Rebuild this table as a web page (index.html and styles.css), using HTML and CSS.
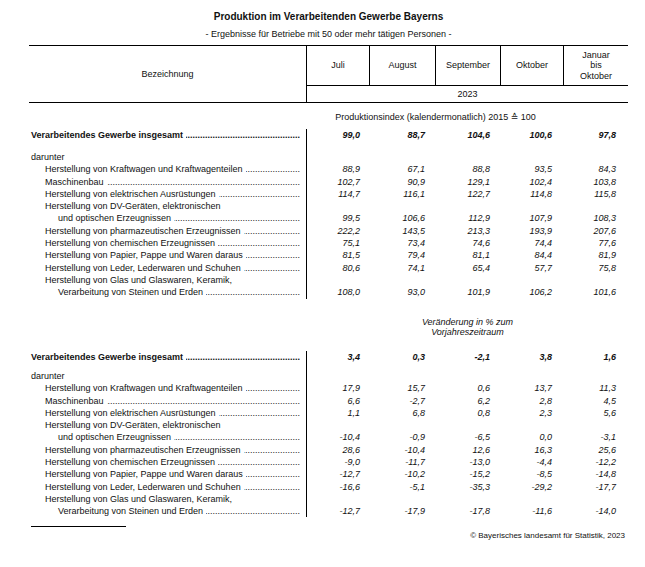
FILE: index.html
```html
<!DOCTYPE html>
<html lang="de">
<head>
<meta charset="utf-8">
<title>Produktion im Verarbeitenden Gewerbe Bayerns</title>
<link rel="stylesheet" href="styles.css">
</head>
<body>
<div class="page">
  <div class="title">Produktion im Verarbeitenden Gewerbe Bayerns</div>
  <div class="subtitle">- Ergebnisse für Betriebe mit 50 oder mehr tätigen Personen -</div>

  <div class="head">
    <div class="hc bez">Bezeichnung</div>
    <div class="hc m">Juli</div>
    <div class="hc m">August</div>
    <div class="hc m">September</div>
    <div class="hc m">Oktober</div>
    <div class="hc m last">Januar<br>bis<br>Oktober</div>
    <div class="hc year">2023</div>
  </div>

  <div class="caption"><span class="cap4">Produktionsindex (kalendermonatlich) 2015 ≙ 100</span></div>

  <div class="block block1">
    <div class="row total"><div class="lbl"><span class="lt">Verarbeitendes Gewerbe insgesamt</span><span class="dots"></span></div><div class="v">99,0</div><div class="v">88,7</div><div class="v">104,6</div><div class="v">100,6</div><div class="v">97,8</div></div>
    <div class="row spacer sp1"><div class="lbl"></div></div>
    <div class="row"><div class="lbl"><span class="lt">darunter</span></div></div>
    <div class="row"><div class="lbl ind"><span class="lt">Herstellung von Kraftwagen und Kraftwagenteilen</span><span class="dots"></span></div><div class="v">88,9</div><div class="v">67,1</div><div class="v">88,8</div><div class="v">93,5</div><div class="v">84,3</div></div>
    <div class="row"><div class="lbl ind"><span class="lt">Maschinenbau</span><span class="dots"></span></div><div class="v">102,7</div><div class="v">90,9</div><div class="v">129,1</div><div class="v">102,4</div><div class="v">103,8</div></div>
    <div class="row"><div class="lbl ind"><span class="lt">Herstellung von elektrischen Ausrüstungen</span><span class="dots"></span></div><div class="v">114,7</div><div class="v">116,1</div><div class="v">122,7</div><div class="v">114,8</div><div class="v">115,8</div></div>
    <div class="row"><div class="lbl ind"><span class="lt">Herstellung von DV-Geräten, elektronischen</span></div></div>
    <div class="row"><div class="lbl ind2"><span class="lt">und optischen Erzeugnissen</span><span class="dots"></span></div><div class="v">99,5</div><div class="v">106,6</div><div class="v">112,9</div><div class="v">107,9</div><div class="v">108,3</div></div>
    <div class="row"><div class="lbl ind"><span class="lt">Herstellung von pharmazeutischen Erzeugnissen</span><span class="dots"></span></div><div class="v">222,2</div><div class="v">143,5</div><div class="v">213,3</div><div class="v">193,9</div><div class="v">207,6</div></div>
    <div class="row"><div class="lbl ind"><span class="lt">Herstellung von chemischen Erzeugnissen</span><span class="dots"></span></div><div class="v">75,1</div><div class="v">73,4</div><div class="v">74,6</div><div class="v">74,4</div><div class="v">77,6</div></div>
    <div class="row"><div class="lbl ind"><span class="lt">Herstellung von Papier, Pappe und Waren daraus</span><span class="dots"></span></div><div class="v">81,5</div><div class="v">79,4</div><div class="v">81,1</div><div class="v">84,4</div><div class="v">81,9</div></div>
    <div class="row"><div class="lbl ind"><span class="lt">Herstellung von Leder, Lederwaren und Schuhen</span><span class="dots"></span></div><div class="v">80,6</div><div class="v">74,1</div><div class="v">65,4</div><div class="v">57,7</div><div class="v">75,8</div></div>
    <div class="row"><div class="lbl ind"><span class="lt">Herstellung von Glas und Glaswaren, Keramik,</span></div></div>
    <div class="row"><div class="lbl ind2"><span class="lt">Verarbeitung von Steinen und Erden</span><span class="dots"></span></div><div class="v">108,0</div><div class="v">93,0</div><div class="v">101,9</div><div class="v">106,2</div><div class="v">101,6</div></div>
  </div>

  <div class="change"><span class="cap5">Veränderung in % zum<br>Vorjahreszeitraum</span></div>

  <div class="block block2">
    <div class="row total"><div class="lbl"><span class="lt">Verarbeitendes Gewerbe insgesamt</span><span class="dots"></span></div><div class="v">3,4</div><div class="v">0,3</div><div class="v">-2,1</div><div class="v">3,8</div><div class="v">1,6</div></div>
    <div class="row spacer sp2"><div class="lbl"></div></div>
    <div class="row"><div class="lbl"><span class="lt">darunter</span></div></div>
    <div class="row"><div class="lbl ind"><span class="lt">Herstellung von Kraftwagen und Kraftwagenteilen</span><span class="dots"></span></div><div class="v">17,9</div><div class="v">15,7</div><div class="v">0,6</div><div class="v">13,7</div><div class="v">11,3</div></div>
    <div class="row"><div class="lbl ind"><span class="lt">Maschinenbau</span><span class="dots"></span></div><div class="v">6,6</div><div class="v">-2,7</div><div class="v">6,2</div><div class="v">2,8</div><div class="v">4,5</div></div>
    <div class="row"><div class="lbl ind"><span class="lt">Herstellung von elektrischen Ausrüstungen</span><span class="dots"></span></div><div class="v">1,1</div><div class="v">6,8</div><div class="v">0,8</div><div class="v">2,3</div><div class="v">5,6</div></div>
    <div class="row"><div class="lbl ind"><span class="lt">Herstellung von DV-Geräten, elektronischen</span></div></div>
    <div class="row"><div class="lbl ind2"><span class="lt">und optischen Erzeugnissen</span><span class="dots"></span></div><div class="v">-10,4</div><div class="v">-0,9</div><div class="v">-6,5</div><div class="v">0,0</div><div class="v">-3,1</div></div>
    <div class="row"><div class="lbl ind"><span class="lt">Herstellung von pharmazeutischen Erzeugnissen</span><span class="dots"></span></div><div class="v">28,6</div><div class="v">-10,4</div><div class="v">12,6</div><div class="v">16,3</div><div class="v">25,6</div></div>
    <div class="row"><div class="lbl ind"><span class="lt">Herstellung von chemischen Erzeugnissen</span><span class="dots"></span></div><div class="v">-9,0</div><div class="v">-11,7</div><div class="v">-13,0</div><div class="v">-4,4</div><div class="v">-12,2</div></div>
    <div class="row"><div class="lbl ind"><span class="lt">Herstellung von Papier, Pappe und Waren daraus</span><span class="dots"></span></div><div class="v">-12,7</div><div class="v">-10,2</div><div class="v">-15,2</div><div class="v">-8,5</div><div class="v">-14,8</div></div>
    <div class="row"><div class="lbl ind"><span class="lt">Herstellung von Leder, Lederwaren und Schuhen</span><span class="dots"></span></div><div class="v">-16,6</div><div class="v">-5,1</div><div class="v">-35,3</div><div class="v">-29,2</div><div class="v">-17,7</div></div>
    <div class="row"><div class="lbl ind"><span class="lt">Herstellung von Glas und Glaswaren, Keramik,</span></div></div>
    <div class="row"><div class="lbl ind2"><span class="lt">Verarbeitung von Steinen und Erden</span><span class="dots"></span></div><div class="v">-12,7</div><div class="v">-17,9</div><div class="v">-17,8</div><div class="v">-11,6</div><div class="v">-14,0</div></div>
  </div>

  <div class="footline"></div>
  <div class="copyright">© Bayerisches landesamt für Statistik, 2023</div>
</div>
</body>
</html>
```
FILE: styles.css
```css
html, body {
  margin: 0;
  padding: 0;
  background: #fff;
}
body {
  font-family: "Liberation Sans", Arial, "DejaVu Sans", sans-serif;
  color: #111;
  font-size: 9px;
}
.page {
  width: 599px;
  margin-left: 29px;
}
.title {
  margin-top: 10px;
  height: 14px;
  line-height: 14px;
  font-size: 10px;
  font-weight: bold;
  text-align: center;
}
.subtitle {
  margin-top: 4px;
  height: 12px;
  line-height: 12px;
  font-size: 9px;
  text-align: center;
}
.head,
.row,
.caption,
.change {
  display: grid;
  grid-template-columns: 278px 63px 66px 65px 63px 64px;
}
.head {
  margin-top: 5px;
  grid-template-rows: 40px 16px;
  border-top: 1px solid #000;
  border-bottom: 1px solid #000;
}
.hc {
  display: flex;
  align-items: center;
  justify-content: center;
  text-align: center;
  font-size: 9px;
  line-height: 10.5px;
  box-sizing: border-box;
}
.bez {
  grid-row: 1 / 3;
  border-right: 1px solid #000;
}
.m {
  border-right: 1px solid #000;
  border-bottom: 1px solid #000;
}
.m.last {
  border-right: none;
}
.year {
  grid-column: 2 / 7;
}
.caption {
  margin-top: 8px;
  height: 12px;
  line-height: 12px;
}
.cap4 {
  grid-column: 2 / 6;
  text-align: center;
}
.block1 {
  margin-top: 6px;
}
.row {
  height: 12.3px;
  line-height: 12.3px;
}
.lbl {
  grid-column: 1;
  display: flex;
  box-sizing: border-box;
  border-right: 1px solid #000;
  padding-left: 2px;
  padding-right: 6px;
  overflow: hidden;
  white-space: nowrap;
}
.lbl.ind {
  padding-left: 16px;
}
.lbl.ind2 {
  padding-left: 29px;
}
.lt {
  flex: none;
}
.dots {
  flex: 1;
  min-width: 0;
  overflow: hidden;
  white-space: nowrap;
  direction: rtl;
  margin-left: 3px;
}
.dots::after {
  content: "...............................................................................................................................................";
}
.total .lbl {
  font-weight: bold;
}
.v {
  text-align: right;
  font-style: italic;
  white-space: nowrap;
}
.total .v {
  font-weight: bold;
}
.row .v:nth-child(2) { padding-right: 10px; }
.row .v:nth-child(3) { padding-right: 11px; }
.row .v:nth-child(4) { padding-right: 11px; }
.row .v:nth-child(5) { padding-right: 12px; }
.row .v:nth-child(6) { padding-right: 12px; }
.sp1 {
  height: 9.7px;
}
.sp2 {
  height: 6.7px;
}
.change {
  margin-top: 18px;
  line-height: 10.5px;
  font-style: italic;
}
.cap5 {
  grid-column: 2 / 7;
  text-align: center;
}
.block2 {
  margin-top: 13.4px;
}
.footline {
  margin-top: 9px;
  margin-left: 2px;
  width: 95px;
  border-top: 1px solid #000;
}
.copyright {
  margin-top: 4px;
  line-height: 10px;
  font-size: 8px;
  text-align: right;
  padding-right: 3px;
}
```
